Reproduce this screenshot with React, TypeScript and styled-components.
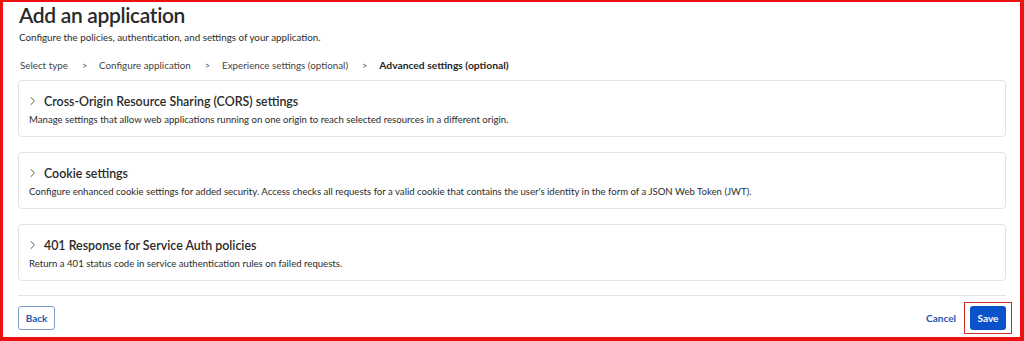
import styled, {createGlobalStyle} from 'styled-components'

const GlobalStyle = createGlobalStyle`
  html, body {
    margin: 0;
    padding: 0;
    background: #ffffff;
  }
  * {
    box-sizing: border-box;
  }
`

interface ISection {
    title: string;
    text: string;
}

const sections: ISection[] = [
    {
        title: 'Cross-Origin Resource Sharing (CORS) settings',
        text: 'Manage settings that allow web applications running on one origin to reach selected resources in a different origin.',
    },
    {
        title: 'Cookie settings',
        text: "Configure enhanced cookie settings for added security. Access checks all requests for a valid cookie that contains the user's identity in the form of a JSON Web Token (JWT).",
    },
    {
        title: '401 Response for Service Auth policies',
        text: 'Return a 401 status code in service authentication rules on failed requests.',
    },
]

const steps = ['Select type', 'Configure application', 'Experience settings (optional)', 'Advanced settings (optional)']

const Chevron = () => (
    <svg width="8" height="10" viewBox="0 0 8 10" fill="none">
        <path d="M2 1.5L5.5 5L2 8.5" stroke="#555" strokeWidth="1" strokeLinecap="round" strokeLinejoin="round"/>
    </svg>
)

const App = () => {
    return (
        <Frame>
            <GlobalStyle/>
            <Title>Add an application</Title>
            <Subtitle>Configure the policies, authentication, and settings of your application.</Subtitle>
            <Steps>
                {steps.map((s, i) => (
                    <Step key={s}>
                        <StepLabel active={i === steps.length - 1}>{s}</StepLabel>
                        {i < steps.length - 1 && <StepSep>&gt;</StepSep>}
                    </Step>
                ))}
            </Steps>
            <SectionList>
                {sections.map((s) => (
                    <SectionCard key={s.title}>
                        <SectionHead>
                            <Chevron/>
                            <SectionTitle>{s.title}</SectionTitle>
                        </SectionHead>
                        <SectionText>{s.text}</SectionText>
                    </SectionCard>
                ))}
            </SectionList>
            <Footer>
                <OutlineButton>Back</OutlineButton>
                <FooterRight>
                    <LinkButton>Cancel</LinkButton>
                    <Highlight>
                        <PrimaryButton>Save</PrimaryButton>
                    </Highlight>
                </FooterRight>
            </Footer>
        </Frame>
    )
}
export default App

// ==========================================

const Frame = styled.div`
  width: 1024px;
  height: 341px;
  border-style: solid;
  border-color: #ee1111;
  border-width: 2px 4px 4px 3px;
  padding: 0 14px 0 15px;
  overflow: hidden;
  display: flex;
  flex-direction: column;
  font-family: Lato, "Open Sans", sans-serif;
  color: #1f1f1f;
`

const Title = styled.h1`
  margin: 0 0 0 1px;
  font-size: 21px;
  font-weight: 600;
  line-height: 26px;
  letter-spacing: -0.35px;
  color: #2a2a2a;
`

const Subtitle = styled.p`
  margin: 2px 0 0 1px;
  font-size: 9.8px;
  line-height: 14px;
  color: #2b2b2b;
`

const Steps = styled.div`
  display: flex;
  align-items: center;
  margin: 14px 0 0 2px;
  height: 14px;
`

const Step = styled.div`
  display: flex;
  align-items: center;
`

const StepLabel = styled.span<{active?: boolean}>`
  font-size: ${(p) => (p.active ? '10.3px' : '9.8px')};
  color: ${(p) => (p.active ? '#1f1f1f' : '#444')};
  font-weight: ${(p) => (p.active ? 700 : 400)};
`

const StepSep = styled.span`
  font-size: 9px;
  color: #555;
  margin: 0 12px 0 14px;
`

const SectionList = styled.div`
  display: flex;
  flex-direction: column;
  gap: 15px;
  margin-top: 8px;
`

const SectionCard = styled.div`
  width: 988px;
  height: 57px;
  border: 1px solid #e3e3e3;
  border-radius: 4px;
  padding: 12px 10px 0 10px;
`

const SectionHead = styled.div`
  display: flex;
  align-items: center;
  gap: 7px;
  height: 16px;
`

const SectionTitle = styled.span`
  font-size: 12.4px;
  font-weight: 600;
  color: #2a2a2a;
`

const SectionText = styled.p`
  margin: 4px 0 0 0;
  font-size: 9.6px;
  line-height: 14px;
  color: #2b2b2b;
`

const Footer = styled.div`
  margin-top: 14px;
  border-top: 1px solid #e3e3e3;
  padding-top: 6px;
  display: flex;
  justify-content: space-between;
  align-items: center;
`

const FooterRight = styled.div`
  display: flex;
  align-items: center;
  gap: 7px;
`

const OutlineButton = styled.button`
  height: 24px;
  width: 37px;
  padding: 0;
  border: 1px solid #7f9fcf;
  border-radius: 3px;
  background: #fff;
  color: #1d56b3;
  font-family: Lato, "Open Sans", sans-serif;
  font-size: 10px;
  font-weight: 700;
`

const LinkButton = styled.button`
  border: none;
  background: transparent;
  color: #1d56b3;
  font-family: Lato, "Open Sans", sans-serif;
  font-size: 10px;
  font-weight: 700;
  padding: 0;
  margin-right: 1px;
`

const Highlight = styled.div`
  border: 1px solid #d12b2b;
  padding: 3px 5px;
  margin-right: -6px;
  display: flex;
`

const PrimaryButton = styled.button`
  height: 24px;
  width: 36px;
  padding: 0;
  border: none;
  border-radius: 3px;
  background: #0a52c9;
  color: #fff;
  font-family: Lato, "Open Sans", sans-serif;
  font-size: 10px;
  font-weight: 700;
`
